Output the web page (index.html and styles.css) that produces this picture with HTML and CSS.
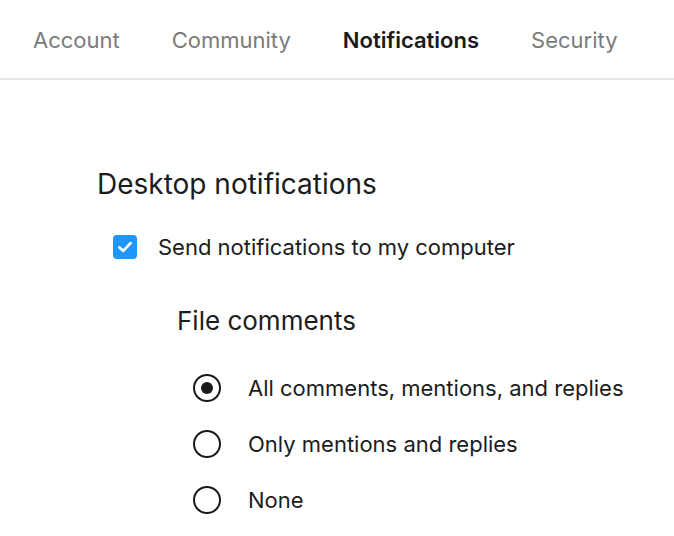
FILE: index.html
```html
<!DOCTYPE html>
<html lang="en">
<head>
    <meta charset="UTF-8">
    <meta name="viewport" content="width=device-width, initial-scale=1.0">
    <title>Notification settings</title>
    <link rel="stylesheet" href="styles.css">
</head>
<body>
    <nav class="tabs">
        <a class="tab" href="#">Account</a>
        <a class="tab" href="#">Community</a>
        <a class="tab active" href="#">Notifications</a>
        <a class="tab" href="#">Security</a>
    </nav>

    <main class="content">
        <h2 class="section-title">Desktop notifications</h2>

        <label class="check-row">
            <span class="checkbox">
                <svg width="18" height="18" viewBox="0 0 16 16">
                    <path d="M3 8.3 L6.4 11.5 L13 4.5" fill="none" stroke="#fff" stroke-width="2.4" stroke-linecap="round" stroke-linejoin="round"/>
                </svg>
            </span>
            Send notifications to my computer
        </label>

        <div class="sub-section">
            <h3 class="sub-title">File comments</h3>

            <label class="radio-row">
                <span class="radio checked"></span>
                All comments, mentions, and replies
            </label>
            <label class="radio-row">
                <span class="radio"></span>
                Only mentions and replies
            </label>
            <label class="radio-row">
                <span class="radio"></span>
                None
            </label>
        </div>
    </main>
</body>
</html>
```

FILE: styles.css
```css
body {
    font-family: Inter, "Noto Sans", sans-serif;
    background-color: #fff;
    margin: 0;
    padding: 0;
    color: #1c1c1c;
}

.tabs {
    display: flex;
    align-items: center;
    gap: 52px;
    box-sizing: border-box;
    height: 80px;
    padding-left: 33px;
    padding-top: 2px;
    border-bottom: 2px solid #e6e6e6;
}

.tab {
    font-size: 22px;
    color: #7b7b7b;
    text-decoration: none;
}

.tab.active {
    color: #1a1a1a;
    font-weight: 600;
}

.content {
    padding: 86px 0 0 97px;
}

.section-title {
    margin: 0;
    font-size: 28px;
    font-weight: 400;
    line-height: 36px;
}

.check-row {
    display: flex;
    align-items: center;
    gap: 21px;
    margin-top: 30px;
    margin-left: 16px;
    font-size: 22px;
    line-height: 30px;
}

.checkbox {
    display: flex;
    align-items: center;
    justify-content: center;
    width: 24px;
    height: 24px;
    border-radius: 4px;
    background-color: #1e96fc;
}

.sub-section {
    margin-left: 80px;
    margin-top: 43px;
}

.sub-title {
    margin: 0 0 23px 0;
    font-size: 26px;
    font-weight: 400;
    line-height: 32px;
}

.radio-row {
    display: flex;
    align-items: center;
    gap: 27px;
    margin-left: 16px;
    height: 56px;
    font-size: 22px;
}

.radio {
    box-sizing: border-box;
    width: 28px;
    height: 28px;
    border: 2px solid #1a1a1a;
    border-radius: 50%;
    display: flex;
    align-items: center;
    justify-content: center;
}

.radio.checked::after {
    content: "";
    width: 12px;
    height: 12px;
    border-radius: 50%;
    background-color: #1a1a1a;
}
```
